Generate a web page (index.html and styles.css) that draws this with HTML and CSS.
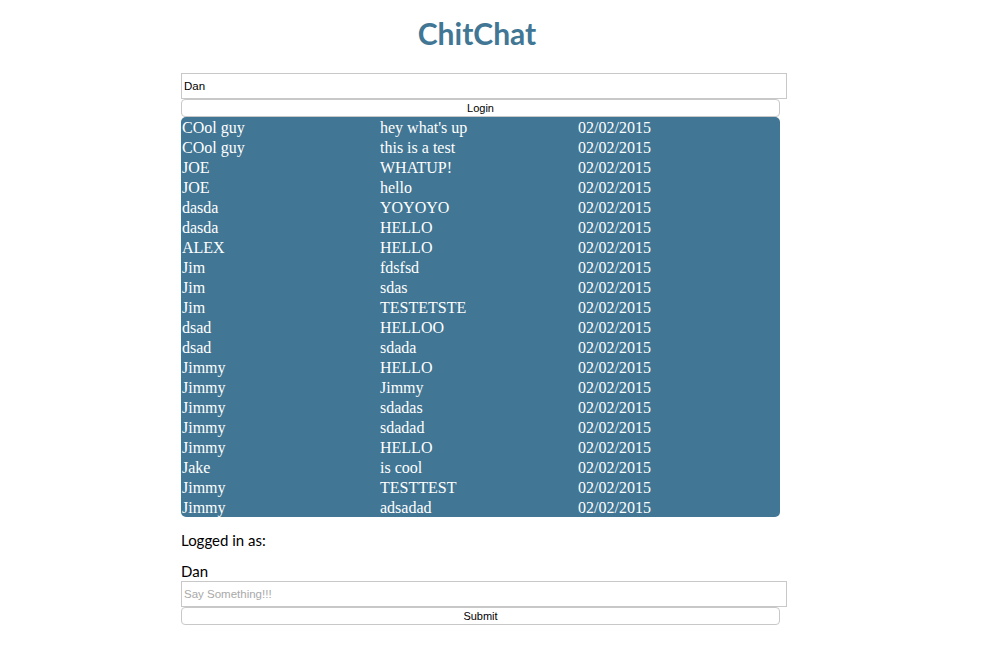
FILE: index.html
```html
<!DOCTYPE html>
<html>
<head>
<meta charset="utf-8">
<link rel="stylesheet" href="styles.css">
</head>
<body>
<div class="page">
  <h1 class="title">ChitChat</h1>
  <input class="field" type="text" value="Dan">
  <button class="btn">Login</button>
  <table class="messages">
    <colgroup><col class="c1"><col class="c2"><col></colgroup>
    <tr><td>COol guy</td><td>hey what's up</td><td>02/02/2015</td></tr>
    <tr><td>COol guy</td><td>this is a test</td><td>02/02/2015</td></tr>
    <tr><td>JOE</td><td>WHATUP!</td><td>02/02/2015</td></tr>
    <tr><td>JOE</td><td>hello</td><td>02/02/2015</td></tr>
    <tr><td>dasda</td><td>YOYOYO</td><td>02/02/2015</td></tr>
    <tr><td>dasda</td><td>HELLO</td><td>02/02/2015</td></tr>
    <tr><td>ALEX</td><td>HELLO</td><td>02/02/2015</td></tr>
    <tr><td>Jim</td><td>fdsfsd</td><td>02/02/2015</td></tr>
    <tr><td>Jim</td><td>sdas</td><td>02/02/2015</td></tr>
    <tr><td>Jim</td><td>TESTETSTE</td><td>02/02/2015</td></tr>
    <tr><td>dsad</td><td>HELLOO</td><td>02/02/2015</td></tr>
    <tr><td>dsad</td><td>sdada</td><td>02/02/2015</td></tr>
    <tr><td>Jimmy</td><td>HELLO</td><td>02/02/2015</td></tr>
    <tr><td>Jimmy</td><td>Jimmy</td><td>02/02/2015</td></tr>
    <tr><td>Jimmy</td><td>sdadas</td><td>02/02/2015</td></tr>
    <tr><td>Jimmy</td><td>sdadad</td><td>02/02/2015</td></tr>
    <tr><td>Jimmy</td><td>HELLO</td><td>02/02/2015</td></tr>
    <tr><td>Jake</td><td>is cool</td><td>02/02/2015</td></tr>
    <tr><td>Jimmy</td><td>TESTTEST</td><td>02/02/2015</td></tr>
    <tr><td>Jimmy</td><td>adsadad</td><td>02/02/2015</td></tr>
  </table>
  <p class="logged">Logged in as:</p>
  <p class="user">Dan</p>
  <input class="field" type="text" placeholder="Say Something!!!">
  <button class="btn">Submit</button>
</div>
</body>
</html>
```

FILE: styles.css
```css
html, body {
  margin: 0;
  padding: 0;
  background: #fff;
}
.page {
  width: 606px;
  margin-left: 181px;
  display: flex;
  flex-direction: column;
  align-items: flex-start;
}
.title {
  align-self: stretch;
  margin: 13px 14px 0 0;
  height: 60px;
  text-align: center;
  font-family: "Lato", sans-serif;
  font-weight: 700;
  font-size: 30px;
  line-height: 40px;
  color: #417694;
}
.field {
  box-sizing: border-box;
  width: 606px;
  height: 26px;
  margin: 0;
  padding: 0 2px;
  border: 1px solid #c8c8c8;
  font-family: "Liberation Sans", Arial, sans-serif;
  font-size: 11.5px;
  color: #000;
  outline: none;
}
.field::placeholder {
  color: #a9a9a9;
}
.btn {
  box-sizing: border-box;
  width: 599px;
  height: 18px;
  margin: 0;
  padding: 0;
  background: #fff;
  border: 1px solid #c8c8c8;
  border-radius: 4px;
  font-family: "Liberation Sans", Arial, sans-serif;
  font-size: 11px;
  color: #000;
}
.messages {
  width: 599px;
  background: #417694;
  border-radius: 5px;
  border-spacing: 0;
  table-layout: fixed;
  font-family: "Liberation Serif", "Times New Roman", serif;
  font-size: 16px;
  color: #fff;
}
.c1 { width: 198px; }
.c2 { width: 198px; }
.messages td {
  padding: 1px 0 0 1px;
  height: 19px;
  line-height: 19px;
  white-space: nowrap;
}
.logged {
  margin: 12px 0 0;
  font-family: "Lato", sans-serif;
  font-size: 15px;
  line-height: 22px;
  color: #000;
}
.user {
  margin: 10px 0 0;
  font-family: "Lato", sans-serif;
  font-size: 15px;
  line-height: 20px;
  color: #000;
}
```
